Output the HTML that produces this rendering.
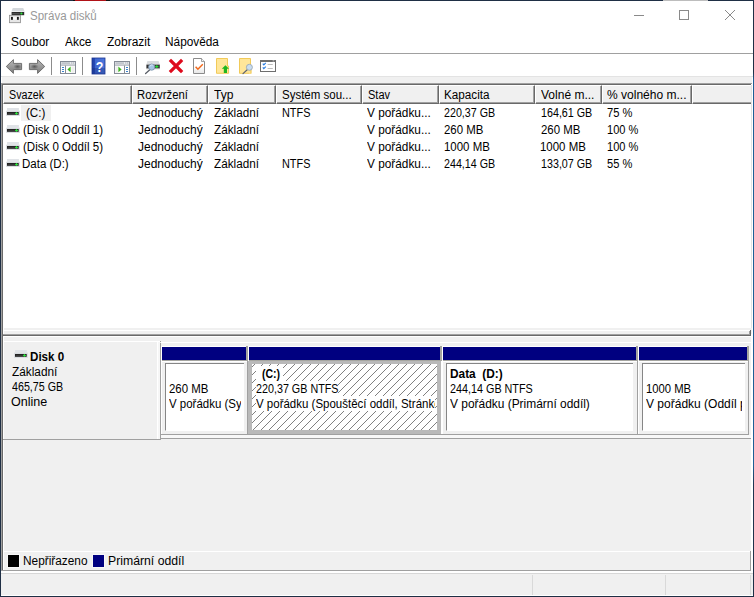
<!DOCTYPE html>
<html lang="cs">
<head>
<meta charset="utf-8">
<title>Správa disků</title>
<style>
html,body{margin:0;padding:0;}
body{width:754px;height:597px;position:relative;overflow:hidden;background:#f0f0f0;font-family:"Liberation Sans",sans-serif;font-size:12px;color:#000;}
.a{position:absolute;}
.t{position:absolute;white-space:nowrap;line-height:14px;height:15px;}
.k{display:inline-block;transform-origin:0 0;white-space:pre;}
.hc{position:absolute;top:85px;height:19px;box-sizing:border-box;background:#f0f0f0;border-top:1px solid #fff;border-left:1px solid #fff;border-right:1px solid #696969;border-bottom:1px solid #696969;}
.hc:after{content:"";position:absolute;left:0;top:0;right:0;bottom:0;border-right:1px solid #a0a0a0;border-bottom:1px solid #a0a0a0;}
.hl{border-right:none;}.hl:after{border-right:none;}
.vs{position:absolute;width:1px;background:#8c8c8c;top:57px;height:18px;}
.navy{position:absolute;top:347px;height:13px;background:#000080;}
.gs{position:absolute;top:346px;height:15px;width:2px;background:#a5a5a0;}
.gl{position:absolute;top:361px;height:73px;width:1px;background:#a0a0a0;}
.pb{position:absolute;top:363px;height:68px;border-bottom:1px solid #fff;box-sizing:border-box;background:#fff;border-left:1px solid #868686;border-top:1px solid #868686;}
svg{position:absolute;overflow:visible;}
</style>
</head>
<body>
<!-- title / menu / toolbar backgrounds -->
<div class="a" style="left:1px;top:1px;width:752px;height:52px;background:#fff;"></div>
<div class="a" style="left:1px;top:53px;width:752px;height:1px;background:#a0a0a0;"></div>
<div class="a" style="left:1px;top:54px;width:752px;height:22px;background:#fff;"></div>
<div class="a" style="left:1px;top:76px;width:752px;height:1px;background:#e3e3e3;"></div>
<div class="a" style="left:1px;top:77px;width:1px;height:6px;background:#fff;"></div>

<!-- window buttons -->
<div class="a" style="left:634px;top:15px;width:10px;height:1px;background:#8a8a8a;"></div>
<div class="a" style="left:679px;top:10px;width:10px;height:10px;box-sizing:border-box;border:1px solid #8a8a8a;"></div>
<svg style="left:725px;top:10px;" width="10" height="10" viewBox="0 0 10 10"><path d="M0 0L10 10M10 0L0 10" stroke="#8a8a8a" stroke-width="1" fill="none"/></svg>


<!-- toolbar separators -->
<div class="vs" style="left:51px;"></div>
<div class="vs" style="left:82px;"></div>
<div class="vs" style="left:136px;"></div>

<!-- list view -->
<div class="a" style="left:1px;top:83px;width:751px;height:245px;background:#fff;"></div>
<div class="a" style="left:1px;top:83px;width:751px;height:1px;background:#a0a0a0;"></div>
<div class="a" style="left:2px;top:84px;width:749px;height:1px;background:#696969;"></div>
<div class="a" style="left:1px;top:83px;width:1px;height:488px;background:#a0a0a0;"></div>
<div class="a" style="left:2px;top:84px;width:1px;height:487px;background:#696969;"></div>
<div class="a" style="left:751px;top:85px;width:1px;height:243px;background:#e3e3e3;"></div>
<!-- header cells -->
<div class="hc" style="left:3px;width:129px;"></div>
<div class="hc" style="left:132px;width:76px;"></div>
<div class="hc" style="left:208px;width:68px;"></div>
<div class="hc" style="left:276px;width:86px;"></div>
<div class="hc" style="left:362px;width:77px;"></div>
<div class="hc" style="left:439px;width:96px;"></div>
<div class="hc" style="left:535px;width:67px;"></div>
<div class="hc" style="left:602px;width:90px;"></div>
<div class="hc hl" style="left:692px;width:59px;"></div>
<!-- selected row label -->
<div class="a" style="left:21px;top:105px;width:30px;height:16px;background:#f0f0f0;"></div>

<!-- bottom pane -->
<div class="a" style="left:3px;top:328px;width:1px;height:242px;background:#fff;"></div>
<div class="a" style="left:3px;top:330px;width:747px;height:1px;background:#fff;"></div>
<div class="a" style="left:3px;top:334px;width:747px;height:1px;background:#a0a0a0;"></div>
<div class="a" style="left:3px;top:335px;width:748px;height:1px;background:#696969;"></div>
<div class="a" style="left:3px;top:336px;width:748px;height:1px;background:#fff;"></div>
<div class="a" style="left:750px;top:330px;width:1px;height:6px;background:#696969;"></div>
<div class="a" style="left:749px;top:331px;width:1px;height:4px;background:#a0a0a0;"></div>
<div class="a" style="left:1px;top:570px;width:751px;height:1px;background:#a0a0a0;"></div>
<div class="a" style="left:751px;top:334px;width:1px;height:237px;background:#fff;"></div>
<!-- disk label panel -->
<div class="a" style="left:4px;top:341px;width:156px;height:1px;background:#fff;"></div>
<div class="a" style="left:161px;top:342px;width:590px;height:1px;background:#fff;"></div>
<div class="a" style="left:161px;top:346px;width:587px;height:1px;background:#fff;"></div>
<div class="a" style="left:157px;top:342px;width:1px;height:97px;background:#fff;"></div><div class="a" style="left:158px;top:342px;width:2px;height:97px;background:#f6f6f6;"></div>
<div class="a" style="left:160px;top:341px;width:1px;height:1px;background:#a0a0a0;"></div><div class="a" style="left:160px;top:343px;width:1px;height:97px;background:#a0a0a0;"></div>
<div class="a" style="left:3px;top:439px;width:158px;height:1px;background:#a0a0a0;"></div>
<!-- partition graph -->
<div class="a" style="left:161px;top:346px;width:1px;height:88px;background:#fff;"></div>
<div class="a" style="left:161px;top:434px;width:588px;height:1px;background:#a0a0a0;"></div>
<div class="a" style="left:161px;top:435px;width:590px;height:3px;background:#f8f8f8;"></div>
<div class="a" style="left:161px;top:438px;width:590px;height:1px;background:#a0a0a0;"></div>
<div class="a" style="left:748px;top:346px;width:1px;height:89px;background:#a0a0a0;"></div>
<div class="a" style="left:162px;top:360px;width:586px;height:1px;background:#a5a5a0;"></div>
<div class="a" style="left:162px;top:361px;width:586px;height:1px;background:#fff;"></div>
<div class="navy" style="left:162px;width:84px;"></div>
<div class="navy" style="left:249px;width:191px;"></div>
<div class="navy" style="left:443px;width:193px;"></div>
<div class="navy" style="left:639px;width:108px;"></div><div class="gs" style="left:747px;"></div>
<div class="gs" style="left:246px;"></div><div class="gl" style="left:247px;"></div><div class="a" style="left:248px;top:346px;width:1px;height:88px;background:#fff;"></div>
<div class="gs" style="left:440px;"></div><div class="gl" style="left:441px;"></div><div class="a" style="left:442px;top:346px;width:1px;height:88px;background:#fff;"></div>
<div class="gs" style="left:636px;"></div><div class="gl" style="left:637px;"></div><div class="a" style="left:638px;top:346px;width:1px;height:88px;background:#fff;"></div>
<!-- partition boxes -->
<div class="pb" style="left:165px;width:79px;"></div>
<div class="a" style="left:441px;top:361px;width:2px;height:73px;background:#fff;"></div>
<div class="a" style="left:248px;top:361px;width:193px;height:73px;background:#b9b9b9;"></div>
<div class="a" id="hatch" style="left:252px;top:364px;width:185px;height:66px;background:#fff;overflow:hidden;">
<svg width="186" height="67" style="left:0;top:0;"><defs><pattern id="h" width="8" height="8" patternUnits="userSpaceOnUse"><g fill="#808080" shape-rendering="crispEdges"><rect x="2" y="0" width="1" height="1"/><rect x="1" y="1" width="1" height="1"/><rect x="0" y="2" width="1" height="1"/><rect x="7" y="3" width="1" height="1"/><rect x="6" y="4" width="1" height="1"/><rect x="5" y="5" width="1" height="1"/><rect x="4" y="6" width="1" height="1"/><rect x="3" y="7" width="1" height="1"/></g></pattern></defs><rect width="186" height="67" fill="url(#h)"/></svg>
</div>
<div class="a" style="left:256px;top:366px;width:27px;height:15px;background:#fff;"></div>
<div class="a" style="left:256px;top:381px;width:82px;height:15px;background:#fff;"></div>
<div class="a" style="left:256px;top:396px;width:179px;height:15px;background:#fff;"></div>
<div class="pb" style="left:446px;width:187px;"></div>
<div class="pb" style="left:642px;width:103px;"></div>

<!-- legend -->
<div class="a" style="left:4px;top:551px;width:747px;height:1px;background:#fff;"></div>
<div class="a" style="left:750px;top:551px;width:1px;height:20px;background:#a0a0a0;"></div>
<div class="a" style="left:7px;top:554px;width:13px;height:14px;background:#f8f8f8;"></div>
<div class="a" style="left:8px;top:555px;width:11px;height:12px;background:#000;"></div>
<div class="a" style="left:92px;top:554px;width:13px;height:14px;background:#f8f8f8;"></div>
<div class="a" style="left:93px;top:555px;width:11px;height:12px;background:#000080;"></div>

<!-- status bar -->
<div class="a" style="left:1px;top:571px;width:752px;height:2px;background:#fff;"></div>
<div class="a" style="left:1px;top:595px;width:752px;height:1px;background:#fff;"></div>
<div class="a" style="left:1px;top:573px;width:752px;height:1px;background:#d7d7d7;"></div>
<div class="a" style="left:532px;top:575px;width:1px;height:20px;background:#d9d9d9;"></div>
<div class="a" style="left:665px;top:575px;width:1px;height:20px;background:#d9d9d9;"></div>
<div class="a" style="left:750px;top:575px;width:1px;height:20px;background:#d9d9d9;"></div>

<!-- title icon -->
<svg style="left:9px;top:8px;" width="16" height="16" viewBox="0 0 16 16">
<path d="M3.8 0h10.4l1.4 3.6H2.4z" fill="#d4d8dc"/><rect x="2.4" y="3.6" width="13.2" height="0.6" fill="#eceef0"/>
<rect x="2.6" y="4" width="12.6" height="3.2" fill="#2c2c2c"/><rect x="3.2" y="5.1" width="7.5" height="1" fill="#555"/><circle cx="12.4" cy="5.5" r="1.1" fill="#2ee63a"/>
<rect x="0.5" y="7.3" width="11" height="7.4" fill="#e6e6e6" stroke="#8c8c8c" stroke-width="0.8"/>
<rect x="2" y="8.9" width="1.9" height="2.9" fill="#1a1a1a"/><rect x="7.9" y="8.9" width="1.9" height="2.9" fill="#1a1a1a"/><rect x="4.2" y="9.2" width="3.4" height="2.4" fill="#fafafa"/>
</svg>
<!-- back / forward -->
<svg style="left:5px;top:58px;" width="18" height="17" viewBox="0 0 18 17"><defs><linearGradient id="ga" x1="0" y1="0" x2="0" y2="1"><stop offset="0" stop-color="#b9b9b9"/><stop offset="1" stop-color="#7c7c7c"/></linearGradient><radialGradient id="gr" cx="0.5" cy="0.5" r="0.5"><stop offset="0" stop-color="#4a4a4a" stop-opacity="0.85"/><stop offset="1" stop-color="#4a4a4a" stop-opacity="0"/></radialGradient></defs>
<path d="M1.3 8.5L8.4 1.6V5.4H16.6V11.6H8.4V15.4Z" fill="url(#ga)" stroke="#6f6f6f" stroke-width="1" stroke-linejoin="round"/><ellipse cx="12.5" cy="8.6" rx="4" ry="2.6" fill="url(#gr)"/></svg>
<svg style="left:28px;top:58px;" width="18" height="17" viewBox="0 0 18 17">
<path d="M16.7 8.5L9.6 1.6V5.4H1.4V11.6H9.6V15.4Z" fill="url(#ga)" stroke="#6f6f6f" stroke-width="1" stroke-linejoin="round"/><ellipse cx="6.5" cy="8.6" rx="4" ry="2.6" fill="url(#gr)"/></svg>
<!-- show/hide console tree -->
<svg style="left:60px;top:61px;" width="16" height="13" viewBox="0 0 16 13">
<rect x="0.5" y="0.5" width="15" height="12" fill="#fff" stroke="#858b96"/><rect x="1" y="1" width="14" height="3.6" fill="#e9ebee"/><rect x="1.5" y="1.6" width="8.5" height="0.9" fill="#9aa0aa"/><rect x="11.3" y="1.4" width="1" height="1.2" fill="#9aa0aa"/><rect x="13.2" y="1.4" width="1" height="1.2" fill="#9aa0aa"/>
<rect x="1" y="3.6" width="14" height="1" fill="#a4a9b2"/><rect x="5" y="4.6" width="1" height="8" fill="#858b96"/>
<rect x="2" y="6" width="2" height="1" fill="#3a82cc"/><rect x="2" y="8" width="2" height="1" fill="#3a82cc"/><rect x="2" y="10" width="2" height="1" fill="#3a82cc"/>
<rect x="11.5" y="5.4" width="3" height="6.4" fill="#efefef"/>
<path d="M10.6 5.6V11.2L7.4 8.4Z" fill="#3db31f"/></svg>
<!-- help -->
<svg style="left:92px;top:58px;" width="13" height="16" viewBox="0 0 13 16"><defs><linearGradient id="gh" x1="0" y1="0" x2="1" y2="0"><stop offset="0" stop-color="#1f3fa6"/><stop offset="0.2" stop-color="#2448b4"/><stop offset="0.22" stop-color="#3e66d0"/><stop offset="1" stop-color="#4d77dc"/></linearGradient></defs>
<rect width="13" height="16" fill="url(#gh)"/><rect y="10" width="13" height="6" fill="#152a78" opacity="0.35"/><rect x="0" y="0" width="13" height="16" fill="none" stroke="#1c3590" stroke-width="0.8"/>
<text transform="translate(7.6 13.9) scale(0.8 1)" font-family="Liberation Sans, sans-serif" font-weight="bold" font-size="15.5" fill="#fff" text-anchor="middle">?</text></svg>
<!-- show/hide action pane -->
<svg style="left:114px;top:61px;" width="16" height="13" viewBox="0 0 16 13">
<rect x="0.5" y="0.5" width="15" height="12" fill="#fff" stroke="#858b96"/><rect x="1" y="1" width="14" height="3.6" fill="#e9ebee"/><rect x="1.5" y="1.6" width="8.5" height="0.9" fill="#9aa0aa"/><rect x="11.3" y="1.4" width="1" height="1.2" fill="#9aa0aa"/><rect x="13.2" y="1.4" width="1" height="1.2" fill="#9aa0aa"/>
<rect x="1" y="3.6" width="14" height="1" fill="#a4a9b2"/><rect x="10" y="4.6" width="1" height="8" fill="#858b96"/>
<rect x="12" y="6" width="2" height="1" fill="#3a82cc"/><rect x="12" y="8" width="2" height="1" fill="#3a82cc"/><rect x="12" y="10" width="2" height="1" fill="#3a82cc"/>
<rect x="1.4" y="5.4" width="2.4" height="6.4" fill="#efefef"/>
<path d="M4.4 5.6V11.2L7.6 8.4Z" fill="#3db31f"/></svg>
<!-- disk + magnifier -->
<svg style="left:145px;top:61px;" width="16" height="13" viewBox="0 0 16 13">
<path d="M2.4 0h11.2l1.2 3.6H1.4z" fill="#d9dcdf"/><rect x="1.4" y="3.6" width="13.4" height="4" fill="#333"/><rect x="1.4" y="7.6" width="13.4" height="0.8" fill="#d4d4d4"/>
<rect x="10.2" y="5" width="3.2" height="1.2" fill="#22dd33"/><rect x="11.2" y="4.2" width="1.2" height="2.8" fill="#22dd33"/>
<path d="M4.8 8.8L0.6 12.5" stroke="#5a5f68" stroke-width="1.3" stroke-linecap="round"/>
<circle cx="6.7" cy="6.1" r="3.1" fill="#a4c4e4" stroke="#7f95ad" stroke-width="0.9"/><path d="M4.7 5.6a2.2 2.2 0 0 1 3.2-1.4" stroke="#e3effa" stroke-width="0.8" fill="none"/></svg>
<!-- delete X -->
<svg style="left:168px;top:58px;" width="16" height="16" viewBox="0 0 16 16"><path d="M3 3L13 13M13 3L3 13" stroke="#de0a1c" stroke-width="3.2" stroke-linecap="square" fill="none"/></svg>
<!-- properties doc -->
<svg style="left:193px;top:58px;" width="12" height="16" viewBox="0 0 12 16"><defs><linearGradient id="gd" x1="0" y1="0" x2="0" y2="1"><stop offset="0.5" stop-color="#fff"/><stop offset="1" stop-color="#e6e6e6"/></linearGradient></defs>
<path d="M0.5 0.5H8.5L11.5 3.5V15.5H0.5Z" fill="url(#gd)" stroke="#8b8b8b"/><path d="M8.5 0.5V3.5H11.5" fill="#f4f4f4" stroke="#8b8b8b" stroke-width="0.8"/>
<path d="M2.6 8.8L4.9 11.2L9.8 6.2" stroke="#f2681a" stroke-width="1.5" fill="none"/></svg>
<!-- yellow page + up arrow -->
<svg style="left:216px;top:58px;" width="14" height="16" viewBox="0 0 14 16">
<path d="M0.5 0.5H11.5V8H12.6V15.3H0.5Z" fill="#ffe699" stroke="#efc54c" stroke-width="0.9"/>
<path d="M9.4 7.2L13 10.8H11V15H7.8V10.8H5.8Z" fill="#1fb61f"/></svg>
<!-- yellow page + magnifier -->
<svg style="left:239px;top:58px;" width="15" height="16" viewBox="0 0 15 16">
<path d="M0.5 0.5H11.5V15.3H0.5Z" fill="#ffe699" stroke="#efc54c" stroke-width="0.9"/><rect x="10" y="11" width="2" height="4.6" fill="#ffe493"/><rect x="11.6" y="11.6" width="0.9" height="4" fill="#ecbd3a"/>
<path d="M8.2 11.8L4 15.6" stroke="#5a6270" stroke-width="1.2" stroke-linecap="round"/>
<circle cx="10.4" cy="9.3" r="3" fill="#c9ddf0" stroke="#9aa8b6" stroke-width="0.9"/></svg>
<!-- checklist -->
<svg style="left:260px;top:60px;" width="16" height="12" viewBox="0 0 16 12">
<rect x="0.5" y="0.5" width="15" height="11" fill="#fff" stroke="#6e6e6e"/><rect x="0" y="0" width="16" height="2" fill="#6e6e6e"/><rect x="12.6" y="0.5" width="1.6" height="0.8" fill="#ddd"/>
<path d="M2.8 3.6L3.8 4.8L5.8 2.8M2.8 7.4L3.8 8.6L5.8 6.6" stroke="#2d7fe2" stroke-width="1.2" fill="none"/>
<rect x="7.6" y="4" width="5.2" height="0.9" fill="#b5b5b5"/><rect x="7.6" y="8" width="5.2" height="0.9" fill="#b5b5b5"/></svg>
<!-- row disk icons -->
<svg style="left:6px;top:108px;" width="14" height="60" viewBox="0 0 14 60"><defs><g id="dk"><rect x="1" y="0" width="11.9" height="2.8" fill="#e0e3e7"/><rect x="0.2" y="2.7" width="13.6" height="5.2" fill="#d6dade"/><rect x="1" y="4" width="11.7" height="2.8" fill="#232323"/><rect x="1.8" y="5" width="7" height="0.8" fill="#3d3d3d"/><rect x="9.1" y="4.9" width="2.8" height="1.1" fill="#2be63c"/><rect x="9.9" y="4.2" width="1.1" height="2.5" fill="#2be63c"/></g></defs>
<use href="#dk"/><use href="#dk" y="17"/><use href="#dk" y="34"/><use href="#dk" y="51"/></svg>
<svg style="left:14px;top:350px;" width="14" height="9" viewBox="0 0 14 9"><use href="#dk"/></svg>

<div class="t" style="left:29.90px;top:8.8px;color:#999;"><span class="k" style="transform:scaleX(0.9621)">Správa disků</span></div>
<div class="t" style="left:10.98px;top:34.8px;"><span class="k" style="transform:scaleX(0.9901)">Soubor</span></div>
<div class="t" style="left:65.30px;top:34.8px;"><span class="k" style="transform:scaleX(0.9914)">Akce</span></div>
<div class="t" style="left:106.73px;top:34.8px;"><span class="k" style="transform:scaleX(0.9983)">Zobrazit</span></div>
<div class="t" style="left:165.41px;top:34.8px;"><span class="k" style="transform:scaleX(0.9860)">Nápověda</span></div>
<div class="t" style="left:9.04px;top:87.8px;"><span class="k" style="transform:scaleX(0.8903)">Svazek</span></div>
<div class="t" style="left:137.36px;top:87.8px;"><span class="k" style="transform:scaleX(0.9415)">Rozvržení</span></div>
<div class="t" style="left:214.45px;top:87.8px;"><span class="k" style="transform:scaleX(1.0040)">Typ</span></div>
<div class="t" style="left:281.60px;top:87.8px;"><span class="k" style="transform:scaleX(0.9577)">Systém sou...</span></div>
<div class="t" style="left:367.52px;top:87.8px;"><span class="k" style="transform:scaleX(0.9204)">Stav</span></div>
<div class="t" style="left:444.23px;top:87.8px;"><span class="k" style="transform:scaleX(0.9749)">Kapacita</span></div>
<div class="t" style="left:541.37px;top:87.8px;"><span class="k" style="transform:scaleX(1.0014)">Volné m...</span></div>
<div class="t" style="left:607.22px;top:87.8px;"><span class="k" style="transform:scaleX(1.0016)">% volného m...</span></div>
<div class="t" style="left:25.87px;top:105.8px;"><span class="k" style="transform:scaleX(0.9676)">(C:)</span></div>
<div class="t" style="left:137.55px;top:105.8px;"><span class="k" style="transform:scaleX(0.9988)">Jednoduchý</span></div>
<div class="t" style="left:214.33px;top:105.8px;"><span class="k" style="transform:scaleX(0.9775)">Základní</span></div>
<div class="t" style="left:281.79px;top:105.8px;"><span class="k" style="transform:scaleX(0.9076)">NTFS</span></div>
<div class="t" style="left:367.28px;top:105.8px;"><span class="k" style="transform:scaleX(0.9858)">V pořádku...</span></div>
<div class="t" style="left:444.44px;top:105.8px;"><span class="k" style="transform:scaleX(0.8909)">220,37 GB</span></div>
<div class="t" style="left:540.52px;top:105.8px;"><span class="k" style="transform:scaleX(0.8931)">164,61 GB</span></div>
<div class="t" style="left:607.02px;top:105.8px;"><span class="k" style="transform:scaleX(0.9295)">75 %</span></div>
<div class="t" style="left:22.68px;top:122.8px;"><span class="k" style="transform:scaleX(0.9600)">(Disk 0 Oddíl 1)</span></div>
<div class="t" style="left:137.55px;top:122.8px;"><span class="k" style="transform:scaleX(0.9988)">Jednoduchý</span></div>
<div class="t" style="left:214.33px;top:122.8px;"><span class="k" style="transform:scaleX(0.9775)">Základní</span></div>
<div class="t" style="left:367.28px;top:122.8px;"><span class="k" style="transform:scaleX(0.9858)">V pořádku...</span></div>
<div class="t" style="left:444.40px;top:122.8px;"><span class="k" style="transform:scaleX(0.9520)">260 MB</span></div>
<div class="t" style="left:540.70px;top:122.8px;"><span class="k" style="transform:scaleX(0.9520)">260 MB</span></div>
<div class="t" style="left:606.79px;top:122.8px;"><span class="k" style="transform:scaleX(0.9221)">100 %</span></div>
<div class="t" style="left:22.68px;top:139.8px;"><span class="k" style="transform:scaleX(0.9600)">(Disk 0 Oddíl 5)</span></div>
<div class="t" style="left:137.55px;top:139.8px;"><span class="k" style="transform:scaleX(0.9988)">Jednoduchý</span></div>
<div class="t" style="left:214.33px;top:139.8px;"><span class="k" style="transform:scaleX(0.9775)">Základní</span></div>
<div class="t" style="left:367.28px;top:139.8px;"><span class="k" style="transform:scaleX(0.9858)">V pořádku...</span></div>
<div class="t" style="left:444.16px;top:139.8px;"><span class="k" style="transform:scaleX(0.9548)">1000 MB</span></div>
<div class="t" style="left:540.46px;top:139.8px;"><span class="k" style="transform:scaleX(0.9548)">1000 MB</span></div>
<div class="t" style="left:606.79px;top:139.8px;"><span class="k" style="transform:scaleX(0.9221)">100 %</span></div>
<div class="t" style="left:22.44px;top:156.8px;"><span class="k" style="transform:scaleX(0.9596)">Data (D:)</span></div>
<div class="t" style="left:137.55px;top:156.8px;"><span class="k" style="transform:scaleX(0.9988)">Jednoduchý</span></div>
<div class="t" style="left:214.33px;top:156.8px;"><span class="k" style="transform:scaleX(0.9775)">Základní</span></div>
<div class="t" style="left:281.79px;top:156.8px;"><span class="k" style="transform:scaleX(0.9076)">NTFS</span></div>
<div class="t" style="left:367.28px;top:156.8px;"><span class="k" style="transform:scaleX(0.9858)">V pořádku...</span></div>
<div class="t" style="left:444.44px;top:156.8px;"><span class="k" style="transform:scaleX(0.8909)">244,14 GB</span></div>
<div class="t" style="left:540.52px;top:156.8px;"><span class="k" style="transform:scaleX(0.8931)">133,07 GB</span></div>
<div class="t" style="left:607.14px;top:156.8px;"><span class="k" style="transform:scaleX(0.9251)">55 %</span></div>
<div class="t" style="left:30.07px;top:350.1px;font-weight:bold;"><span class="k" style="transform:scaleX(0.9670)">Disk 0</span></div>
<div class="t" style="left:11.63px;top:365.1px;"><span class="k" style="transform:scaleX(0.9863)">Základní</span></div>
<div class="t" style="left:11.78px;top:380.1px;"><span class="k" style="transform:scaleX(0.8903)">465,75 GB</span></div>
<div class="t" style="left:11.35px;top:395.1px;"><span class="k" style="transform:scaleX(1.0448)">Online</span></div>
<div class="t" style="left:168.70px;top:382.1px;"><span class="k" style="transform:scaleX(0.9520)">260 MB</span></div>
<div class="t" style="left:168.58px;top:397.1px;width:72.0px;overflow:hidden;"><span class="k" style="transform:scaleX(0.9557)">V pořádku (Systémový oddíl EFI)</span></div>
<div class="t" style="left:261.95px;top:366.9px;font-weight:bold;"><span class="k" style="transform:scaleX(0.8774)">(C:)</span></div>
<div class="t" style="left:255.84px;top:382.1px;"><span class="k" style="transform:scaleX(0.8957)">220,37 GB NTFS</span></div>
<div class="t" style="left:255.68px;top:397.1px;width:179.1px;overflow:hidden;"><span class="k" style="transform:scaleX(0.9573)">V pořádku (Spouštěcí oddíl, Stránkovací soubor, Výpis stavu systému, Primární oddíl)</span></div>
<div class="t" style="left:449.66px;top:366.9px;font-weight:bold;white-space:pre;"><span class="k" style="transform:scaleX(0.9885)">Data  (D:)</span></div>
<div class="t" style="left:449.84px;top:382.1px;"><span class="k" style="transform:scaleX(0.8990)">244,14 GB NTFS</span></div>
<div class="t" style="left:449.68px;top:397.1px;"><span class="k" style="transform:scaleX(0.9937)">V pořádku (Primární oddíl)</span></div>
<div class="t" style="left:645.88px;top:382.1px;"><span class="k" style="transform:scaleX(0.9398)">1000 MB</span></div>
<div class="t" style="left:645.97px;top:397.1px;width:95.6px;overflow:hidden;"><span class="k" style="transform:scaleX(1.0006)">V pořádku (Oddíl pro obnovení)</span></div>
<div class="t" style="left:23.41px;top:554.1px;"><span class="k" style="transform:scaleX(0.9863)">Nepřiřazeno</span></div>
<div class="t" style="left:108.28px;top:554.1px;"><span class="k" style="transform:scaleX(1.0196)">Primární oddíl</span></div>

<!-- window frame -->
<div class="a" style="left:0;top:0;width:754px;height:1px;background:#1f2f45;"></div>
<div class="a" style="left:73px;top:0;width:37px;height:1px;background:#111;"></div>
<div class="a" style="left:75px;top:0;width:31px;height:1px;background:#b01217;"></div>
<div class="a" style="left:663px;top:0;width:45px;height:1px;background:#bdbdbd;"></div>
<div class="a" style="left:0;top:0;width:1px;height:597px;background:#1f2f45;"></div>
<div class="a" style="left:752px;top:77px;width:1px;height:494px;background:#fff;"></div>
<div class="a" style="left:753px;top:0;width:1px;height:597px;background:linear-gradient(#1f2f45 0,#1f2f45 72px,#1d5f96 80px,#1d5f96 465px,#1f3450 485px,#1f2f45 597px);"></div>
<div class="a" style="left:0;top:596px;width:754px;height:1px;background:#1f2f45;"></div>
</body>
</html>
